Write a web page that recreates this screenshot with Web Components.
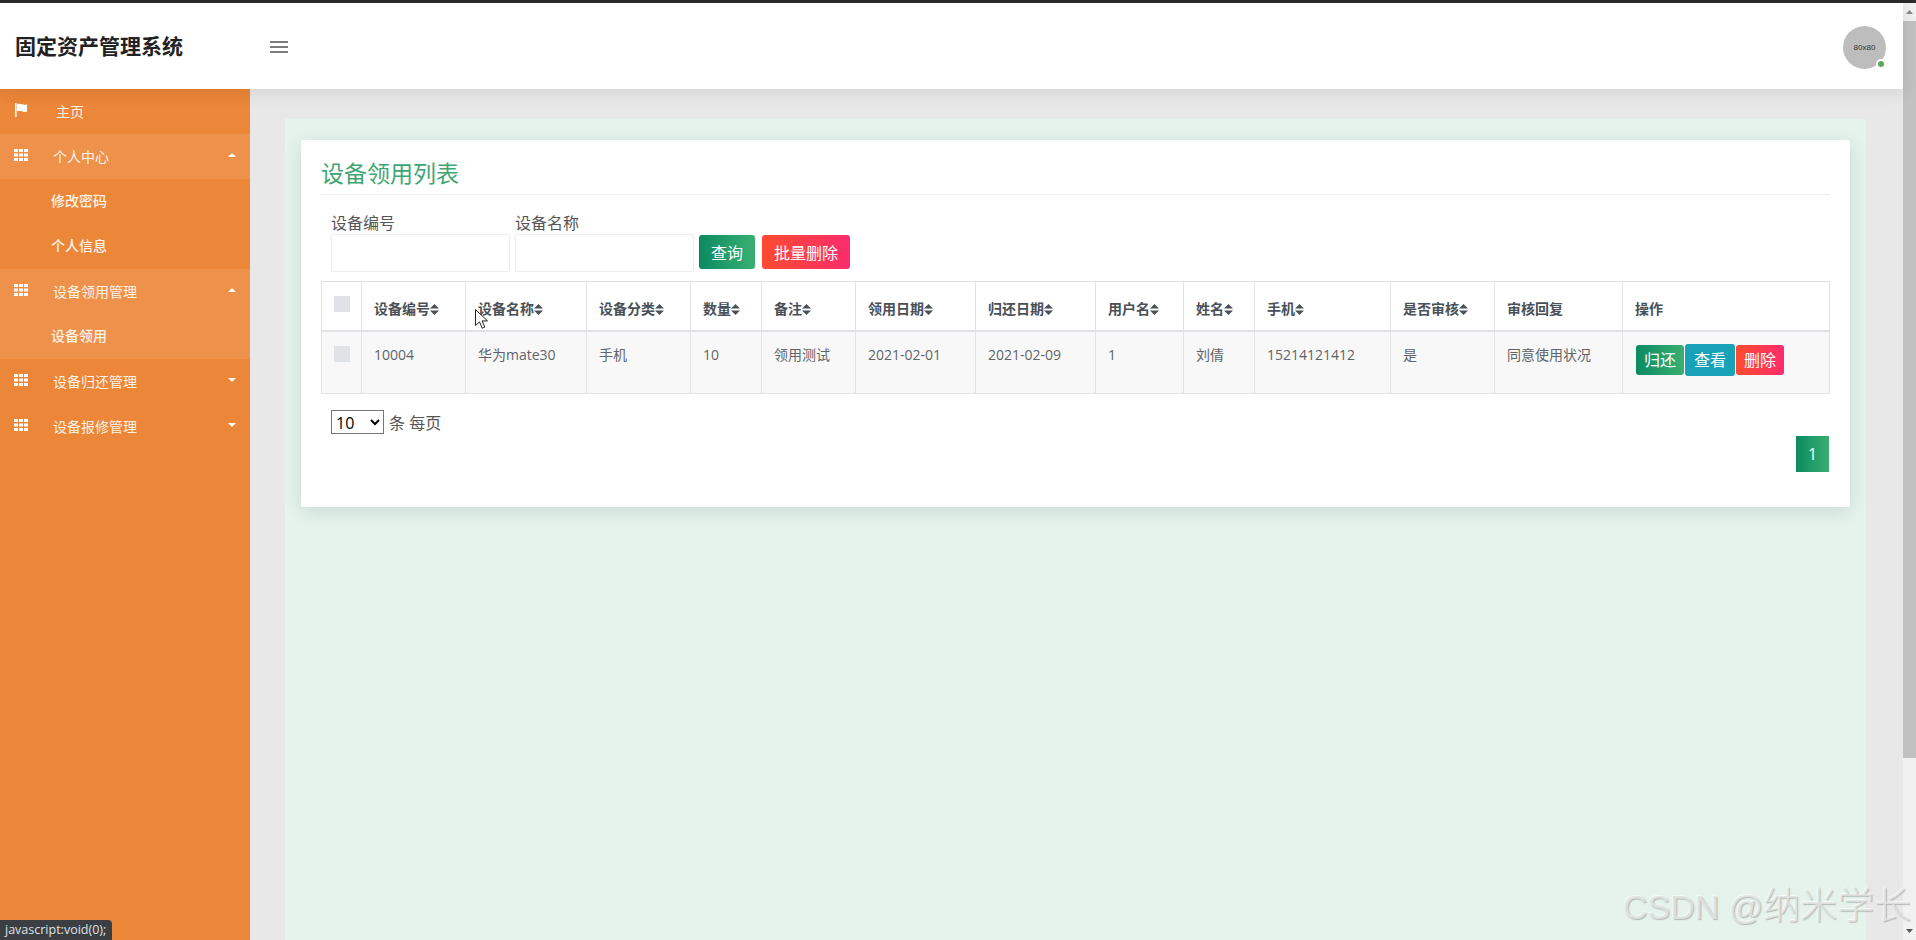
<!DOCTYPE html>
<html lang="zh-CN">
<head>
<meta charset="utf-8">
<title>固定资产管理系统</title>
<style>
    html, body { margin: 0; height: 100%; overflow: hidden; }
    body {
        font-family: "Open Sans", "Noto Sans CJK SC", sans-serif;
        font-size: 14px;
        color: #555;
        background: #e8e8e8;
        display: flex;
        flex-direction: column;
        height: 940px;
        position: relative;
    }
    .top-strip { height: 3px; background: #2b2b2b; flex: none; }
    .frame { flex: 1; display: flex; min-height: 0; }
    .page { flex: 1; min-width: 0; display: flex; flex-direction: column; }
    .body-row { flex: 1; display: flex; min-height: 0; }
</style>
</head>
<body>
<div class="top-strip"></div>
<div class="frame">
    <div class="page">
        <app-header brand="固定资产管理系统"></app-header>
        <div class="body-row">
            <side-nav></side-nav>
            <main-panel>
                <list-card heading="设备领用列表">
                    <search-form></search-form>
                    <data-table></data-table>
                    <table-footer></table-footer>
                </list-card>
            </main-panel>
        </div>
    </div>
    <page-scrollbar></page-scrollbar>
</div>
<status-bubble>javascript:void(0);</status-bubble>
<mouse-cursor></mouse-cursor>
<water-mark></water-mark>

<script>
const GRAD_GREEN = 'linear-gradient(90deg, #0b8a62, #3aaf72)';
const GRAD_RED = 'linear-gradient(90deg, #fd4b30, #fb2c6c)';

class AppHeader extends HTMLElement {
    constructor() {
        super();
        this.attachShadow({ mode: 'open' });
    }

    connectedCallback() {
        this.shadowRoot.innerHTML = `
            <style>
                :host {
                    display: flex;
                    align-items: center;
                    height: 86px;
                    flex: none;
                    background: #fff;
                    box-shadow: 0 3px 16px rgba(0, 0, 0, 0.1);
                    position: relative;
                    z-index: 2;
                }
                .brand {
                    width: 250px;
                    box-sizing: border-box;
                    padding: 0 0 2px 15px;
                    font-size: 21px;
                    font-weight: 700;
                    color: #222;
                }
                .burger { margin: 2px 0 0 20px; display: block; }
                .avatar {
                    margin: 2px 17px 0 auto;
                    width: 43px;
                    height: 43px;
                    border-radius: 50%;
                    background: #bdbdbd;
                    color: #333;
                    font: 8px "Liberation Sans", sans-serif;
                    display: flex;
                    align-items: center;
                    justify-content: center;
                    position: relative;
                }
                .dot {
                    position: absolute;
                    right: 0;
                    bottom: 0;
                    width: 6px;
                    height: 6px;
                    border-radius: 50%;
                    background: #5ca65e;
                    border: 2px solid #fff;
                }
            </style>
            <div class="brand">${this.getAttribute('brand')}</div>
            <svg class="burger" width="18" height="12" viewBox="0 0 18 12">
                <rect y="0" width="18" height="2" fill="#7d7d7d"/>
                <rect y="5" width="18" height="2" fill="#7d7d7d"/>
                <rect y="10" width="18" height="2" fill="#7d7d7d"/>
            </svg>
            <div class="avatar">80x80<span class="dot"></span></div>
        `;
    }
}

const navGroups = [
    { name: '主页', icon: 'flag', indent: 56 },
    { name: '个人中心', open: true, subs: ['修改密码', '个人信息'] },
    { name: '设备领用管理', open: true, active: true, subs: ['设备领用'] },
    { name: '设备归还管理' },
    { name: '设备报修管理' },
];

const gridIcon = `<svg width="14" height="14" viewBox="0 0 14 14" fill="#fff">
    <rect x="0" y="1" width="4" height="3"/><rect x="5" y="1" width="4" height="3"/><rect x="10" y="1" width="4" height="3"/>
    <rect x="0" y="5.5" width="4" height="3"/><rect x="5" y="5.5" width="4" height="3"/><rect x="10" y="5.5" width="4" height="3"/>
    <rect x="0" y="10" width="4" height="3"/><rect x="5" y="10" width="4" height="3"/><rect x="10" y="10" width="4" height="3"/>
</svg>`;
const flagIcon = `<svg width="14" height="14" viewBox="0 0 14 14" fill="#fff">
    <path d="M1 0h1.6v14H1zM3 1.2c2-1 3.6-.4 5 .1 1.5.5 3 .8 5-.1v7.2c-2 1-3.5.6-5-.1-1.5-.6-3-.9-5 0z"/>
</svg>`;

class SideNav extends HTMLElement {
    constructor() {
        super();
        this.attachShadow({ mode: 'open' });
    }

    connectedCallback() {
        const rows = navGroups.map(group => {
            const caret = group.icon ? '' : `<svg class="caret" width="8" height="4" viewBox="0 0 8 4" fill="#fff">
                <path d="${group.open ? 'M0 4L4 0l4 4z' : 'M0 0l4 4 4-4z'}"/></svg>`;
            const subs = (group.subs || []).map(s => `<div class="sub">${s}</div>`).join('');
            return `
                <div class="group ${group.active ? 'active' : ''}">
                    <div class="item ${group.open ? 'open' : ''}">
                        <span class="icon">${group.icon === 'flag' ? flagIcon : gridIcon}</span>
                        <span class="label" style="${group.indent ? 'margin-left:' + (group.indent - 53) + 'px' : ''}">${group.name}</span>
                        ${caret}
                    </div>
                    ${subs}
                </div>`;
        }).join('');
        this.shadowRoot.innerHTML = `
            <style>
                :host {
                    display: block;
                    width: 250px;
                    flex: none;
                    background: #ec8638;
                    color: #fff;
                    font-size: 14px;
                }
                .item {
                    box-sizing: border-box;
                    height: 45px;
                    padding-bottom: 2px;
                    display: flex;
                    align-items: center;
                    position: relative;
                }
                .item.open, .group.active { background: #ee914b; }
                .icon {
                    width: 53px;
                    flex: none;
                    box-sizing: border-box;
                    padding: 0 0 1px 14px;
                    display: flex;
                }
                .label { color: #fdf3ea; }
                .caret { position: absolute; right: 14px; top: 19px; }
                .sub {
                    height: 45px;
                    line-height: 43px;
                    padding-left: 51px;
                    color: #fdf3ea;
                    font-weight: 500;
                }
            </style>
            ${rows}
        `;
    }
}

class MainPanel extends HTMLElement {
    constructor() {
        super();
        this.attachShadow({ mode: 'open' });
    }

    connectedCallback() {
        this.shadowRoot.innerHTML = `
            <style>
                :host {
                    flex: 1;
                    min-width: 0;
                    display: flex;
                    padding: 30px 37px 0 35px;
                    background: #e8e8e8;
                }
                .mint {
                    flex: 1;
                    min-width: 0;
                    background: #e5f3ec;
                    padding: 21px 16px;
                }
            </style>
            <div class="mint"><slot></slot></div>
        `;
    }
}

class ListCard extends HTMLElement {
    constructor() {
        super();
        this.attachShadow({ mode: 'open' });
    }

    connectedCallback() {
        this.shadowRoot.innerHTML = `
            <style>
                :host {
                    display: block;
                    background: #fff;
                    padding: 0 20px 35px;
                    box-shadow: 0 4px 18px rgba(0, 40, 60, 0.12);
                    border-radius: 2px;
                }
                h2 {
                    margin: 0;
                    padding: 18px 0 6px;
                    font-size: 23px;
                    line-height: 30px;
                    font-weight: 400;
                    color: #3fa673;
                    border-bottom: 1px solid #eef0f0;
                }
            </style>
            <h2>${this.getAttribute('heading')}</h2>
            <slot></slot>
        `;
    }
}

class GradButton extends HTMLElement {
    constructor() {
        super();
        this.attachShadow({ mode: 'open' });
    }

    connectedCallback() {
        this.shadowRoot.innerHTML = `
            <style>
                :host {
                    display: inline-flex;
                    align-items: center;
                    justify-content: center;
                    box-sizing: border-box;
                    border-radius: 3px;
                    color: #fff;
                    font-size: 16px;
                    cursor: pointer;
                }
                :host([kind="green"]) { background: ${GRAD_GREEN}; }
                :host([kind="red"]) { background: ${GRAD_RED}; }
                :host([kind="info"]) { background: #17a2b8; }
            </style>
            <slot></slot>
        `;
    }
}

class SearchForm extends HTMLElement {
    constructor() {
        super();
        this.attachShadow({ mode: 'open' });
    }

    connectedCallback() {
        this.shadowRoot.innerHTML = `
            <style>
                :host {
                    display: flex;
                    align-items: flex-end;
                    gap: 5px;
                    padding: 15px 0 0 10px;
                    margin-bottom: 9px;
                }
                label { display: block; font-size: 16px; height: 24px; line-height: 26px; color: #555; }
                input {
                    display: block;
                    box-sizing: border-box;
                    width: 179px;
                    height: 38px;
                    border: 1px solid #eceef0;
                    border-radius: 2px;
                    background: #fff;
                }
                grad-button { height: 34px; margin-bottom: 3px; }
                .query { width: 56px; }
                .del { width: 88px; margin-left: 2px; }
            </style>
            <div><label>设备编号</label><input type="text"></div>
            <div><label>设备名称</label><input type="text"></div>
            <grad-button class="query" kind="green">查询</grad-button>
            <grad-button class="del" kind="red">批量删除</grad-button>
        `;
    }
}

const columns = [
    { title: '', width: 40, check: true },
    { title: '设备编号', width: 104, sort: true },
    { title: '设备名称', width: 121, sort: true },
    { title: '设备分类', width: 104, sort: true },
    { title: '数量', width: 71, sort: true },
    { title: '备注', width: 94, sort: true },
    { title: '领用日期', width: 120, sort: true },
    { title: '归还日期', width: 120, sort: true },
    { title: '用户名', width: 88, sort: true },
    { title: '姓名', width: 71, sort: true },
    { title: '手机', width: 136, sort: true },
    { title: '是否审核', width: 104, sort: true },
    { title: '审核回复', width: 128 },
    { title: '操作', width: 207 },
];

const rowData = ['10004', '华为mate30', '手机', '10', '领用测试', '2021-02-01', '2021-02-09', '1', '刘倩', '15214121412', '是', '同意使用状况'];

const sortIcon = `<svg class="sort" width="9" height="11" viewBox="0 0 9 11" fill="#495057">
    <path d="M4.5 0L9 4.6H0zM4.5 11L0 6.4h9z"/>
</svg>`;

class DataTable extends HTMLElement {
    constructor() {
        super();
        this.attachShadow({ mode: 'open' });
    }

    connectedCallback() {
        const cols = columns.map(c => `<col style="width:${c.width}px">`).join('');
        const heads = columns.map(c => c.check
            ? '<th class="chk"><span class="box"></span></th>'
            : `<th>${c.title}${c.sort ? sortIcon : ''}</th>`).join('');
        const cells = rowData.map(v => `<td>${v}</td>`).join('');
        this.shadowRoot.innerHTML = `
            <style>
                :host { display: block; }
                table {
                    width: 1508px;
                    table-layout: fixed;
                    border-collapse: collapse;
                    font-size: 14px;
                    color: #606468;
                }
                th, td {
                    border: 1px solid #e0e2e6;
                    padding: 12px;
                    text-align: left;
                    line-height: 21px;
                    white-space: nowrap;
                }
                th {
                    height: 25px;
                    padding-bottom: 11px;
                    font-weight: 700;
                    font-size: 14px;
                    color: #495057;
                    vertical-align: bottom;
                    border-bottom-width: 2px;
                }
                th.chk { vertical-align: top; padding: 14px 0 0 12px; }
                td { vertical-align: top; height: 37px; background: #f8f8f9; }
                td.chk { padding: 14px 0 0 12px; }
                .box { display: block; width: 16px; height: 16px; background: #dfe2e6; }
                .sort { vertical-align: -1px; }
                .ops { display: flex; align-items: center; gap: 1px; margin-left: 1px; }
                .ops grad-button { width: 48px; height: 30px; }
                .ops grad-button[kind="info"] { width: 50px; height: 32px; }
            </style>
            <table>
                <colgroup>${cols}</colgroup>
                <thead><tr>${heads}</tr></thead>
                <tbody><tr>
                    <td class="chk"><span class="box"></span></td>
                    ${cells}
                    <td><div class="ops">
                        <grad-button kind="green">归还</grad-button>
                        <grad-button kind="info">查看</grad-button>
                        <grad-button kind="red">删除</grad-button>
                    </div></td>
                </tr></tbody>
            </table>
        `;
    }
}

class TableFooter extends HTMLElement {
    constructor() {
        super();
        this.attachShadow({ mode: 'open' });
    }

    connectedCallback() {
        this.shadowRoot.innerHTML = `
            <style>
                :host { display: block; padding-top: 16px; }
                .size {
                    display: flex;
                    align-items: center;
                    gap: 5px;
                    padding-left: 10px;
                    height: 24px;
                    font-size: 16px;
                    color: #555;
                }
                select {
                    width: 53px;
                    height: 24px;
                    font: 16px "Open Sans", sans-serif;
                    background: #fff;
                }
                .pager { display: flex; justify-content: flex-end; margin-top: 2px; padding-right: 1px; }
                .page-no {
                    width: 33px;
                    height: 36px;
                    display: flex;
                    align-items: center;
                    justify-content: center;
                    background: ${GRAD_GREEN};
                    color: #fff;
                    font-size: 16px;
                }
            </style>
            <div class="size">
                <select><option>10</option><option>20</option></select>
                <span>条 每页</span>
            </div>
            <div class="pager"><span class="page-no">1</span></div>
        `;
    }
}

class PageScrollbar extends HTMLElement {
    constructor() {
        super();
        this.attachShadow({ mode: 'open' });
    }

    connectedCallback() {
        this.shadowRoot.innerHTML = `
            <style>
                :host {
                    display: flex;
                    flex-direction: column;
                    align-items: stretch;
                    width: 13px;
                    flex: none;
                    background: #f1f1f1;
                }
                .arrow { height: 18px; display: flex; align-items: center; justify-content: center; flex: none; }
                .thumb { height: 737px; background: #c1c1c1; }
                .rest { flex: 1; }
            </style>
            <div class="arrow"><svg width="7" height="4" viewBox="0 0 7 4" fill="#888"><path d="M0 4l3.5-4L7 4z"/></svg></div>
            <div class="thumb"></div>
            <div class="rest"></div>
            <div class="arrow"><svg width="7" height="4" viewBox="0 0 7 4" fill="#555"><path d="M0 0l3.5 4L7 0z"/></svg></div>
        `;
    }
}

class StatusBubble extends HTMLElement {
    constructor() {
        super();
        this.attachShadow({ mode: 'open' });
    }

    connectedCallback() {
        this.shadowRoot.innerHTML = `
            <style>
                :host {
                    position: absolute;
                    left: 0;
                    bottom: 0;
                    height: 20px;
                    line-height: 20px;
                    padding: 0 6px 0 5px;
                    background: #3b3f44;
                    color: #dfe1e4;
                    font-size: 12.5px;
                    border-top-right-radius: 4px;
                    z-index: 5;
                }
            </style>
            <slot></slot>
        `;
    }
}

class MouseCursor extends HTMLElement {
    constructor() {
        super();
        this.attachShadow({ mode: 'open' });
    }

    connectedCallback() {
        this.shadowRoot.innerHTML = `
            <style>
                :host { position: absolute; left: 475px; top: 309px; width: 13px; height: 20px; z-index: 6; }
                svg { display: block; }
            </style>
            <svg width="13" height="20" viewBox="0 0 13 20">
                <path d="M.5.5v16l4-3.6 2.7 6.3 2.6-1.100-2.700-6.200h5.400z" fill="#fff" stroke="#222" stroke-width="1"/>
            </svg>
        `;
    }
}

class WaterMark extends HTMLElement {
    constructor() {
        super();
        this.attachShadow({ mode: 'open' });
    }

    connectedCallback() {
        this.shadowRoot.innerHTML = `
            <style>
                :host {
                    position: absolute;
                    left: 1623px;
                    top: 885px;
                    font: 34px/44px "Liberation Sans", "Noto Sans CJK SC", sans-serif;
                    color: rgba(224, 228, 227, 0.9);
                    text-shadow: 1px 1px 1px rgba(130, 130, 130, 0.5), -1px -1px 0 rgba(255, 255, 255, 0.6);
                    white-space: nowrap;
                    z-index: 4;
                }
                span { font-size: 37px; font-weight: 300; }
            </style>
            CSDN @<span>纳米学长</span>
        `;
    }
}

customElements.define('app-header', AppHeader);
customElements.define('side-nav', SideNav);
customElements.define('main-panel', MainPanel);
customElements.define('list-card', ListCard);
customElements.define('grad-button', GradButton);
customElements.define('search-form', SearchForm);
customElements.define('data-table', DataTable);
customElements.define('table-footer', TableFooter);
customElements.define('page-scrollbar', PageScrollbar);
customElements.define('status-bubble', StatusBubble);
customElements.define('mouse-cursor', MouseCursor);
customElements.define('water-mark', WaterMark);
</script>
</body>
</html>
